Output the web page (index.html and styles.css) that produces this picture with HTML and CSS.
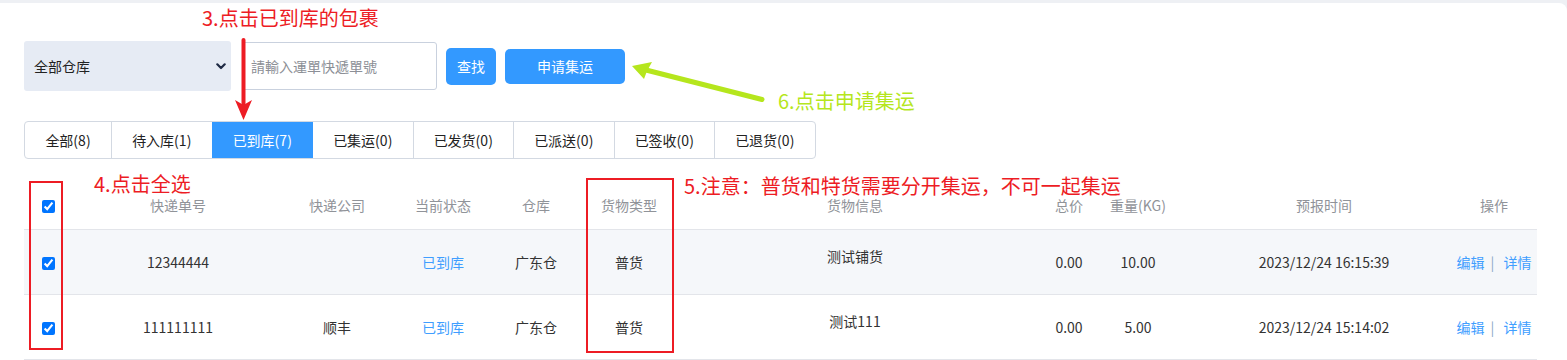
FILE: index.html
```html
<!DOCTYPE html>
<html lang="zh-CN">
<head>
<meta charset="utf-8">
<title>包裹列表</title>
<link rel="stylesheet" href="styles.css">
</head>
<body>
<div class="page">
  <div class="card">
    <div class="toolbar">
      <div class="select-wrap">
        <select class="select">
          <option>全部仓库</option>
        </select>
        <svg class="chevron" width="10" height="7" viewBox="0 0 10 7"><path d="M1.3 1.3 L5 5 L8.7 1.3" fill="none" stroke="#1f2a44" stroke-width="2.2" stroke-linecap="round" stroke-linejoin="round"/></svg>
      </div>
      <input class="search" type="text" placeholder="請輸入運單快遞單號">
      <button class="btn btn-find">查找</button>
      <button class="btn btn-apply">申请集运</button>
    </div>

    <div class="tabs">
      <div class="tab first">全部(8)</div>
      <div class="tab">待入库(1)</div>
      <div class="tab active">已到库(7)</div>
      <div class="tab">已集运(0)</div>
      <div class="tab">已发货(0)</div>
      <div class="tab">已派送(0)</div>
      <div class="tab">已签收(0)</div>
      <div class="tab">已退货(0)</div>
    </div>

    <table class="grid">
      <colgroup>
        <col style="width:48px"><col style="width:212px"><col style="width:106px"><col style="width:106px"><col style="width:80px"><col style="width:106px"><col style="width:346px"><col style="width:82px"><col style="width:56px"><col style="width:274px"><col style="width:97px">
      </colgroup>
      <thead>
        <tr>
          <th><input type="checkbox" class="chk" checked></th>
          <th>快递单号</th>
          <th>快递公司</th>
          <th>当前状态</th>
          <th>仓库</th>
          <th>货物类型</th>
          <th>货物信息</th>
          <th>总价</th>
          <th>重量(KG)</th>
          <th class="c-time">预报时间</th>
          <th class="c-op">操作</th>
        </tr>
      </thead>
      <tbody>
        <tr class="alt">
          <td><input type="checkbox" class="chk" checked></td>
          <td>12344444</td>
          <td></td>
          <td class="link">已到库</td>
          <td>广东仓</td>
          <td>普货</td>
          <td class="info">测试铺货</td>
          <td>0.00</td>
          <td>10.00</td>
          <td class="c-time">2023/12/24 16:15:39</td>
          <td class="c-op"><span class="link">编辑</span><span class="sep">|</span><span class="link">详情</span></td>
        </tr>
        <tr>
          <td><input type="checkbox" class="chk" checked></td>
          <td>111111111</td>
          <td>顺丰</td>
          <td class="link">已到库</td>
          <td>广东仓</td>
          <td>普货</td>
          <td class="info">测试111</td>
          <td>0.00</td>
          <td>5.00</td>
          <td class="c-time">2023/12/24 15:14:02</td>
          <td class="c-op"><span class="link">编辑</span><span class="sep">|</span><span class="link">详情</span></td>
        </tr>
      </tbody>
    </table>
  </div>

  <div class="note note-red note3">3.点击已到库的包裹</div>
  <div class="note note-red note4">4.点击全选</div>
  <div class="note note-red note5">5.注意：普货和特货需要分开集运，不可一起集运</div>
  <div class="note note-green note6">6.点击申请集运</div>
  <div class="box box-check"></div>
  <div class="box box-type"></div>
  <svg class="arrows" width="1567" height="360" viewBox="0 0 1567 360">
    <line x1="243.5" y1="40" x2="243.5" y2="104" stroke="#ed1c24" stroke-width="4" stroke-linecap="round"/>
    <polygon points="235,100 243.5,120 252,100 243.5,105" fill="#ed1c24"/>
    <line x1="762" y1="99.5" x2="646" y2="70" stroke="#b5e61d" stroke-width="5" stroke-linecap="round"/>
    <polygon points="632,66 652,62 647,71 644,79" fill="#b5e61d"/>
  </svg>
</div>
</body>
</html>
```

FILE: styles.css
```css
* { box-sizing: border-box; }

html, body {
  margin: 0;
  padding: 0;
  background: #eef0f4;
  font-family: "Noto Sans CJK SC", "Noto Sans", sans-serif;
  font-size: 14px;
  color: #333;
}

.page {
  position: relative;
  width: 1567px;
  height: 360px;
  overflow: hidden;
}

.card {
  margin-top: 3px;
  background: #fff;
  border-radius: 0 8px 0 0;
  padding: 38px 30px 0 24px;
  height: 357px;
}

/* toolbar */
.toolbar {
  display: flex;
  align-items: center;
  height: 50px;
}

.select-wrap {
  position: relative;
  width: 207px;
  height: 50px;
  margin-right: 11px;
}

.select {
  appearance: none;
  -webkit-appearance: none;
  width: 100%;
  height: 100%;
  border: none;
  border-radius: 3px;
  background: #e6ebf4;
  padding: 0 0 0 10px;
  font-family: inherit;
  font-size: 14px;
  color: #222;
  outline: none;
}

.chevron {
  position: absolute;
  left: 192px;
  top: 22px;
}

.search {
  width: 195px;
  height: 48px;
  border: 1px solid #c9d1de;
  border-radius: 3px;
  padding: 0 0 0 8px;
  font-family: inherit;
  font-size: 14px;
  color: #333;
  margin-right: 9px;
  outline: none;
}
.search::placeholder { color: #8c8f96; }

.btn {
  border: none;
  background: #3399ff;
  color: #fff;
  font-family: inherit;
  font-size: 14px;
  border-radius: 5px;
  padding: 0;
  line-height: 1;
}
.btn-find { width: 50px; height: 37px; margin-right: 9px; }
.btn-apply { width: 120px; height: 35px; }

/* tabs */
.tabs {
  display: flex;
  width: max-content;
  margin-top: 30px;
  border: 1px solid #d3d9e2;
  border-radius: 4px;
  overflow: hidden;
  height: 38px;
}
.tab {
  flex: none;
  width: 100.5px;
  text-align: center;
  line-height: 36px;
  font-size: 14px;
  color: #222;
  border-left: 1px solid #d3d9e2;
  white-space: nowrap;
}
.tab.first { width: 86px; border-left: none; }
.tab.active { background: #3399ff; color: #fff; border-left-color: #3399ff; }
.tab.active + .tab { border-left-color: #3399ff; }

/* table */
.grid {
  margin-top: 20px;
  width: 1513px;
  table-layout: fixed;
  border-collapse: collapse;
}
.grid th, .grid td {
  padding: 0;
  text-align: center;
  vertical-align: middle;
  white-space: nowrap;
  border-bottom: 1px solid #e3e5ea;
}
.grid th {
  height: 50px;
  font-weight: normal;
  color: #909399;
  padding-top: 2px;
}
.grid td {
  height: 65px;
  color: #333;
}
.grid tr.alt td { background: #f5f7fa; }

.grid .chk {
  width: 13px;
  height: 13px;
  margin: 0;
  vertical-align: middle;
  accent-color: #0075ff;
}

.grid .c-time { padding-left: 42px; }
.grid .c-op { padding-left: 11px; }
.grid td.info { padding-bottom: 11px; }

.grid .link, .link { color: #409eff; }
.grid .sep { color: #8aa6c6; margin: 0 9px 0 6px; }

/* annotations */
.note {
  position: absolute;
  font-size: 20px;
  line-height: 24px;
  white-space: nowrap;
}
.note-red { color: #ed1c24; }
.note-green { color: #b5e61d; }
.note3 { left: 202px; top: 6px; }
.note4 { left: 94px; top: 172px; }
.note5 { left: 684px; top: 174px; }
.note6 { left: 778px; top: 89px; }

.box {
  position: absolute;
  border: 2px solid #ed1c24;
}
.box-check { left: 29px; top: 181px; width: 34px; height: 169px; }
.box-type { left: 586px; top: 178px; width: 88px; height: 175px; }

.arrows {
  position: absolute;
  left: 0;
  top: 0;
  pointer-events: none;
}
```
